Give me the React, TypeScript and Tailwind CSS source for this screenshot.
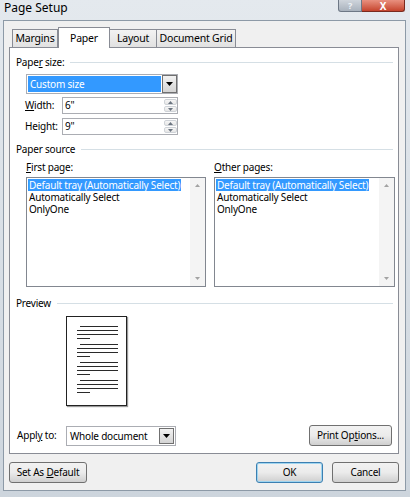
import type { ReactNode } from 'react';

function Arrow({ dir = 'down', color = '#000', w = 7, h = 4 }: { dir?: 'up' | 'down'; color?: string; w?: number; h?: number }) {
  const pts = dir === 'down' ? `0,0 ${w},0 ${w / 2},${h}` : `0,${h} ${w},${h} ${w / 2},0`;
  return (
    <svg width={w} height={h} viewBox={`0 0 ${w} ${h}`}>
      <polygon points={pts} fill={color} />
    </svg>
  );
}

function GroupHeader({ children }: { children: ReactNode }) {
  return (
    <div className="flex items-center gap-[6px] h-[15px]">
      <span>{children}</span>
      <div className="flex-1 h-px bg-[#d5dfe5]" />
    </div>
  );
}

function DropButton() {
  return (
    <div className="w-[15px] h-full flex items-center justify-center border border-[#707070] bg-gradient-to-b from-[#f2f2f2] to-[#d4d4d4]">
      <Arrow />
    </div>
  );
}

function Spinner() {
  return (
    <div className="w-[13px] h-full flex flex-col gap-px py-px">
      <div className="flex-1 flex items-center justify-center border border-[#cfd3d8] rounded-[2px] bg-gradient-to-b from-[#f6f6f6] to-[#e6e6e6]">
        <Arrow dir="up" color="#6a7480" w={5} h={3} />
      </div>
      <div className="flex-1 flex items-center justify-center border border-[#cfd3d8] rounded-[2px] bg-gradient-to-b from-[#f6f6f6] to-[#e6e6e6]">
        <Arrow color="#6a7480" w={5} h={3} />
      </div>
    </div>
  );
}

function ListBox({ width }: { width: string }) {
  return (
    <div className={`${width} h-[110px] flex border border-[#828790] bg-white`}>
      <div className="flex-1 flex flex-col items-start pt-px pl-px">
        <span className="bg-[#3399ff] text-white px-px leading-[12px]">Default tray (Automatically Select)</span>
        <span className="px-px leading-[12px]">Automatically Select</span>
        <span className="px-px leading-[12px]">OnlyOne</span>
      </div>
      <div className="w-[15px] flex flex-col items-center justify-between bg-[#f4f4f4] py-[6px]">
        <Arrow dir="up" color="#a3a3a3" w={5} h={3} />
        <Arrow color="#a3a3a3" w={5} h={3} />
      </div>
    </div>
  );
}

function Btn({ children, w, primary }: { children: ReactNode; w: string; primary?: boolean }) {
  return (
    <div
      className={`${w} h-[21px] flex items-center justify-center rounded-[3px] border ${
        primary ? 'border-[#3c7fb1] shadow-[inset_0_0_0_1px_#9fd5f0]' : 'border-[#707070]'
      } bg-gradient-to-b from-[#f2f2f2] via-[#ebebeb] to-[#cfcfcf]`}
    >
      <span>{children}</span>
    </div>
  );
}

function PageLines() {
  return (
    <div className="flex flex-col gap-[5px]">
      {[0, 1, 2, 3].map((g) => (
        <div key={g} className="flex flex-col gap-[3px]">
          <div className="h-px w-[38px] ml-[13px] bg-[#2a2a2a]" />
          <div className="h-px w-[41px] ml-[10px] bg-[#2a2a2a]" />
          <div className="h-px w-[41px] ml-[10px] bg-[#2a2a2a]" />
          <div className="h-px w-[13px] ml-[10px] bg-[#2a2a2a]" />
        </div>
      ))}
    </div>
  );
}

export default function App() {
  return (
    <div className="w-[410px] h-[497px] flex flex-col bg-gradient-to-b from-[#e4e9ee] to-[#cdd5dd] text-[10px] tracking-[-0.2px] text-black font-['Noto_Sans',sans-serif] overflow-hidden">
      {/* title bar */}
      <div className="h-[20px] flex items-start justify-between pl-[4px] pr-[5px]">
        <span className="text-[12px] leading-[14px] pt-px tracking-normal">Page Setup</span>
        <div className="flex">
          <div className="w-[24px] h-[12px] flex items-center justify-center rounded-bl-[3px] border border-t-0 border-[#6d7785] bg-gradient-to-b from-[#cfd5dc] to-[#a9b2bd] text-[9px] font-bold text-[#eef2f6] leading-none">
            ?
          </div>
          <div className="w-[43px] h-[12px] flex items-center justify-center rounded-br-[3px] border border-t-0 border-l-0 border-[#7a2a1e] bg-gradient-to-b from-[#e8907f] to-[#c5432c] text-[10px] font-bold text-white leading-none">
            X
          </div>
        </div>
      </div>

      {/* client area */}
      <div className="mx-[3px] mr-[4px] h-[471px] flex flex-col border border-[#8d9aa7] bg-[#f0f0f0] pl-[5px] pr-[6px] pt-[6px]">
        {/* tabs */}
        <div className="flex items-end h-[20px] ml-[3px] text-[10.5px]">
          <div className="w-[46px] h-[18px] flex items-center justify-center border border-b-0 border-[#898c95] bg-gradient-to-b from-[#f3f3f3] to-[#e1e1e1]">
            Margins
          </div>
          <div className="w-[52px] h-[21px] -mb-px relative z-10 flex items-start pt-[3px] justify-center border border-b-0 border-[#898c95] bg-white">
            Paper
          </div>
          <div className="w-[47px] h-[18px] flex items-center justify-center border border-b-0 border-l-0 border-[#898c95] bg-gradient-to-b from-[#f3f3f3] to-[#e1e1e1]">
            Layout
          </div>
          <div className="w-[79px] h-[18px] flex items-center justify-center border border-b-0 border-l-0 border-[#898c95] bg-gradient-to-b from-[#f3f3f3] to-[#e1e1e1]">
            Document Grid
          </div>
        </div>

        {/* panel */}
        <div className="h-[407px] flex flex-col border border-[#898c95] bg-white pl-[6px] pr-[5px]">
          <div className="mt-[7px]">
            <GroupHeader>
              Pape<u>r</u> size:
            </GroupHeader>
          </div>
          <div className="mt-[4px] ml-[10px] w-[152px] h-[20px] flex border border-[#abadb3] bg-white">
            <div className="flex-1 p-px">
              <div className="h-full bg-[#3399ff] text-white flex items-center pl-[2px]">Custom size</div>
            </div>
            <DropButton />
          </div>
          <div className="mt-[3px] ml-[9px] flex items-center">
            <span className="w-[37px]">
              <u>W</u>idth:
            </span>
            <div className="w-[116px] h-[17px] flex border border-[#abadb3] bg-white">
              <span className="flex-1 pl-[2px] leading-[15px]">6"</span>
              <Spinner />
            </div>
          </div>
          <div className="mt-[4px] ml-[9px] flex items-center">
            <span className="w-[37px]">
              Hei<u>g</u>ht:
            </span>
            <div className="w-[116px] h-[17px] flex border border-[#abadb3] bg-white">
              <span className="flex-1 pl-[2px] leading-[15px]">9"</span>
              <Spinner />
            </div>
          </div>

          <div className="mt-[7px]">
            <GroupHeader>Paper source</GroupHeader>
          </div>
          <div className="mt-[3px] ml-[10px] flex gap-[8px]">
            <div className="flex flex-col gap-[2px]">
              <span className="leading-[15px]">
                <u>F</u>irst page:
              </span>
              <ListBox width="w-[180px]" />
            </div>
            <div className="flex flex-col gap-[2px]">
              <span className="leading-[15px]">
                <u>O</u>ther pages:
              </span>
              <ListBox width="w-[181px]" />
            </div>
          </div>

          <div className="mt-[9px]">
            <GroupHeader>Preview</GroupHeader>
          </div>
          <div className="mt-[5px] ml-[50px] w-[61px] h-[90px] border border-[#222] bg-white pt-[9px] shadow-[1px_1px_1px_#9a9a9a]">
            <PageLines />
          </div>

          <div className="mt-[19px] flex items-center justify-between pr-[1px]">
            <div className="flex items-center">
              <span className="ml-px w-[49px]">
                Appl<u>y</u> to:
              </span>
              <div className="w-[110px] h-[20px] flex border border-[#abadb3] bg-white">
                <span className="flex-1 pl-[3px] leading-[18px]">Whole document</span>
                <div className="p-px">
                  <DropButton />
                </div>
              </div>
            </div>
            <Btn w="w-[83px]">
              Print Op<u>t</u>ions...
            </Btn>
          </div>
        </div>

        {/* bottom buttons */}
        <div className="mt-[8px] flex items-center">
          <Btn w="w-[78px]">
            Set As <u>D</u>efault
          </Btn>
          <div className="ml-auto flex gap-[9px]">
            <Btn w="w-[67px]" primary>
              OK
            </Btn>
            <Btn w="w-[67px]">Cancel</Btn>
          </div>
        </div>
      </div>
    </div>
  );
}
